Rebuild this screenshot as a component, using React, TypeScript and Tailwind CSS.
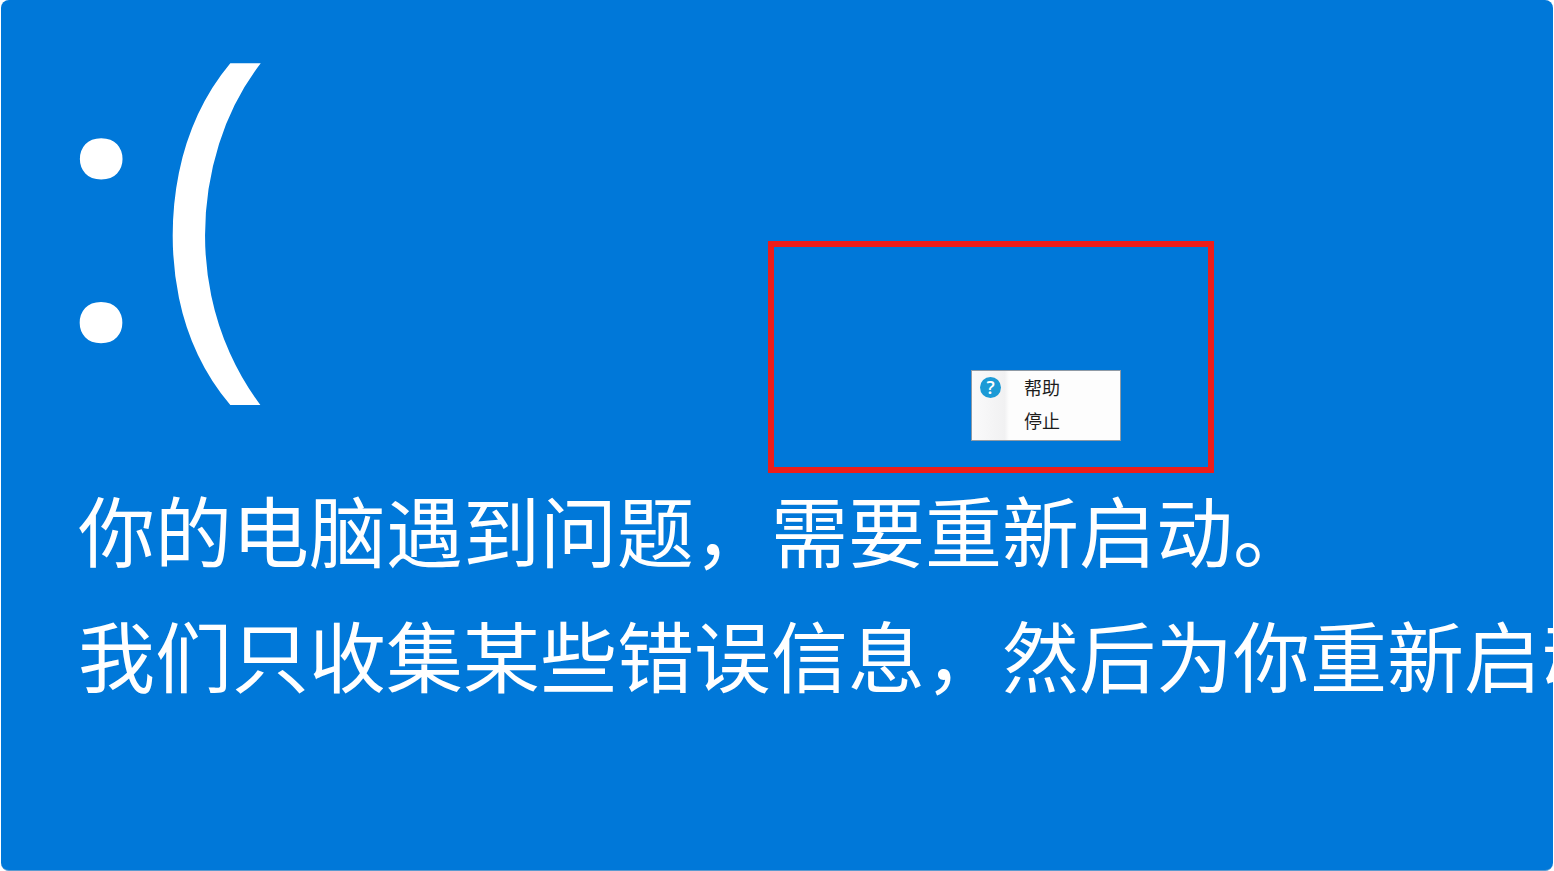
import React from 'react'

const lines = [
  '你的电脑遇到问题，需要重新启动。',
  '我们只收集某些错误信息，然后为你重新启动',
];

function TrayMenu() {
  return (
    <ul className="flex flex-col w-[150px] border border-[#8f9aa5] bg-linear-to-r from-[#fafafb] via-[#f1f1f2] via-22% to-[#fdfdfd] to-25% pb-[3px] font-['Noto_Sans_CJK_SC',sans-serif] text-[18px] leading-[33px] text-[#1c1c1c]">
      <li>
        <button className="flex w-full items-center pl-2 text-left hover:bg-sky-100">
          <span className="flex w-[44px]">
            <span aria-hidden="true" className="flex h-[21px] w-[21px] items-center justify-center rounded-full bg-[#1c9ad6] font-['Open_Sans',sans-serif] text-[18px] font-semibold text-white">?</span>
          </span>
          帮助
        </button>
      </li>
      <li>
        <button className="w-full pl-[52px] text-left hover:bg-sky-100">停止</button>
      </li>
    </ul>
  )
}

export default function App() {
  return (
    <div className="min-h-screen flex flex-col bg-white px-px">
      <main className="relative grow overflow-hidden rounded-lg bg-[#0078d9] border-b border-[#5b9bd0] text-white">
        <h1 className="flex h-[466px] items-start pl-[54px] leading-[382px]">
          <span className="w-[102px] pt-5 font-['Roboto',sans-serif] text-[380px]">:</span>
          <span className="font-['Open_Sans',sans-serif] text-[392px]">(</span>
        </h1>
        <div className="pl-[77px] font-['Noto_Sans_CJK_SC',sans-serif] text-[77px] leading-[125px] whitespace-nowrap">
          {lines.map((line) => (
            <p key={line}>{line}</p>
          ))}
        </div>
        {/* red frame around the tray menu */}
        <div className="absolute left-[767px] top-[241px] flex h-[232px] w-[446px] items-end justify-end border-6 border-[#ee1c1a] pr-[87px] pb-[26px]">
          <TrayMenu />
        </div>
      </main>
    </div>
  )
}
